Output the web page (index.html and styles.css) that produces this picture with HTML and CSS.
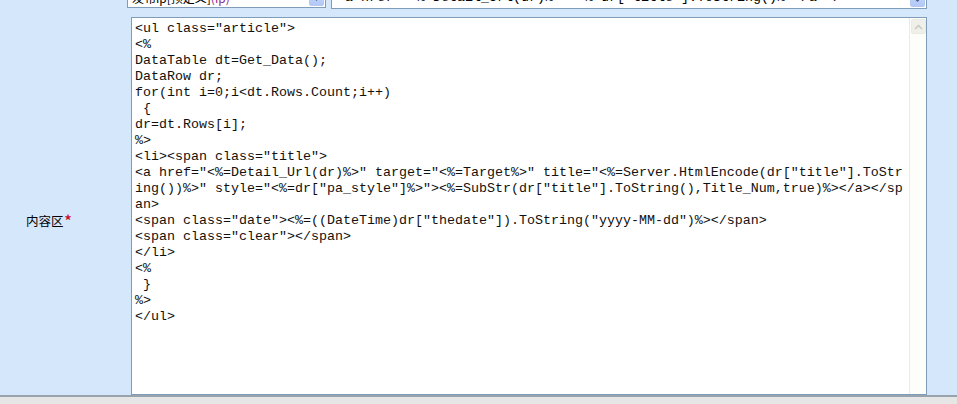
FILE: index.html
```html
<!DOCTYPE html>
<html lang="zh">
<head>
    <meta charset="UTF-8">
    <title>模板编辑</title>
    <link rel="stylesheet" href="styles.css">
</head>
<body>
    <div class="form">
        <div class="row row-top">
            <div class="label"></div>
            <div class="field field-top">
                <div class="select select-short">
                    <span class="select-text">发布ip[预定义]<span class="hint">(ip)</span></span>
                    <span class="drop-btn"><svg width="9" height="6" viewBox="0 0 9 6"><path d="M1 1 L4.5 4.5 L8 1" fill="none" stroke="#4d6185" stroke-width="2"/></svg></span>
                </div>
                <div class="select select-long">
                    <span class="select-text mono">&lt;a href="&lt;%=Detail_Url(dr)%&gt;"&gt;&lt;%=dr["title"].ToString()%&gt;&lt;/a&gt;&lt;/</span>
                    <span class="drop-btn"><svg width="9" height="6" viewBox="0 0 9 6"><path d="M1 1 L4.5 4.5 L8 1" fill="none" stroke="#4d6185" stroke-width="2"/></svg></span>
                </div>
            </div>
        </div>

        <div class="row row-content">
            <div class="label label-content">内容区<span class="required">*</span></div>
            <div class="field">
                <div class="code-box">
<pre class="code">&lt;ul class="article"&gt;
&lt;%
DataTable dt=Get_Data();
DataRow dr;
for(int i=0;i&lt;dt.Rows.Count;i++)
 {
dr=dt.Rows[i];
%&gt;
&lt;li&gt;&lt;span class="title"&gt;
&lt;a href="&lt;%=Detail_Url(dr)%&gt;" target="&lt;%=Target%&gt;" title="&lt;%=Server.HtmlEncode(dr["title"].ToStr
ing())%&gt;" style="&lt;%=dr["pa_style"]%&gt;"&gt;&lt;%=SubStr(dr["title"].ToString(),Title_Num,true)%&gt;&lt;/a&gt;&lt;/sp
an&gt;
&lt;span class="date"&gt;&lt;%=((DateTime)dr["thedate"]).ToString("yyyy-MM-dd")%&gt;&lt;/span&gt;
&lt;span class="clear"&gt;&lt;/span&gt;
&lt;/li&gt;
&lt;%
 }
%&gt;
&lt;/ul&gt;</pre>
                    <div class="scrollbar">
                        <div class="scroll-up"><svg width="9" height="6" viewBox="0 0 9 6"><path d="M1 5 L4.5 1.5 L8 5" fill="none" stroke="#c9c9bf" stroke-width="1.5"/></svg></div>
                    </div>
                </div>
            </div>
        </div>

        <div class="row-next"></div>
    </div>
</body>
</html>
```

FILE: styles.css
```css
body {
    margin: 0;
    background-color: #d5e7fb;
    font-family: "Noto Sans CJK SC", "Liberation Sans", sans-serif;
    font-size: 12px;
    color: #000;
    overflow: hidden;
}
.form {
    margin-top: -13px;
}
.row {
    display: flex;
    padding-right: 30px;
}
.label {
    width: 127px;
    flex: none;
}
.field {
    flex: 1;
    display: flex;
}
.row-top {
    height: 21px;
}
.field-top {
    gap: 5px;
}
.select {
    box-sizing: border-box;
    height: 21px;
    border: 1px solid #7f9db9;
    background-color: #fff;
    display: flex;
    align-items: flex-end;
    overflow: hidden;
}
.select-short {
    width: 199px;
}
.select-long {
    flex: 1;
    height: 22px;
}
.select-text {
    flex: 1;
    padding-left: 4px;
    line-height: 16px;
    margin-bottom: 1px;
    white-space: nowrap;
    overflow: hidden;
}
.select-text .hint {
    color: #8a2a8e;
}
.select-text.mono {
    padding-left: 5px;
    font-family: "Liberation Mono", "Courier New", monospace;
    font-size: 13.333px;
    margin-bottom: 2px;
}
.drop-btn {
    width: 15px;
    height: 17px;
    margin: 1px;
    flex: none;
    border-radius: 2px;
    background: linear-gradient(#c9d9fc, #b2c8f7);
    border: 1px solid #b6c8ef;
    box-sizing: border-box;
    display: flex;
    align-items: center;
    justify-content: center;
}
.row-content {
    margin-top: 9px;
}
.label-content {
    display: flex;
    align-items: center;
    padding-top: 28px;
    padding-left: 26px;
    box-sizing: border-box;
    font-size: 12.5px;
}
.required {
    color: #c8102e;
    font-weight: bold;
    font-size: 14px;
    margin-left: 1px;
}
.code-box {
    flex: 1;
    margin-left: 4px;
    height: 378px;
    box-sizing: border-box;
    border: 1px solid #7f9db9;
    background-color: #fff;
    display: flex;
}
.code {
    flex: 1;
    margin: 0;
    padding: 3px 0 0 3px;
    font-family: "Liberation Mono", "Courier New", monospace;
    font-size: 13.333px;
    line-height: 16px;
    color: #111;
    white-space: pre;
    overflow: hidden;
}
.scrollbar {
    width: 16px;
    flex: none;
    border-left: 1px solid #ebebe4;
    background-color: #fdfdf9;
}
.scroll-up {
    width: 15px;
    height: 15px;
    margin: 1px 0 0 1px;
    box-sizing: border-box;
    background-color: #f0f0ea;
    border: 1px solid #ebebe3;
    border-radius: 2px;
    display: flex;
    align-items: center;
    justify-content: center;
}
.row-next {
    height: 20px;
    border-top: 2px solid #98a3ad;
    background-color: #e6e6e6;
}
```
